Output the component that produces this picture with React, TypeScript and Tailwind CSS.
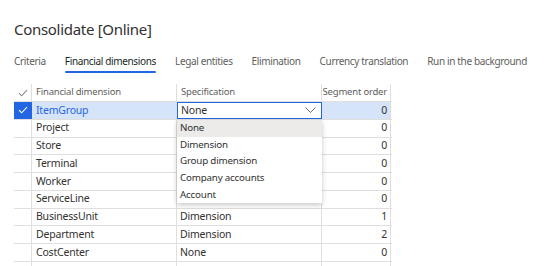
import React from 'react';

const rows = [
  { name: 'ItemGroup', spec: 'None', order: 0 },
  { name: 'Project', spec: 'None', order: 0 },
  { name: 'Store', spec: 'None', order: 0 },
  { name: 'Terminal', spec: 'None', order: 0 },
  { name: 'Worker', spec: 'None', order: 0 },
  { name: 'ServiceLine', spec: 'None', order: 0 },
  { name: 'BusinessUnit', spec: 'Dimension', order: 1 },
  { name: 'Department', spec: 'Dimension', order: 2 },
  { name: 'CostCenter', spec: 'None', order: 0 },
  { name: '', spec: '', order: null as number | null },
];

const tabs = ['Criteria', 'Financial dimensions', 'Legal entities', 'Elimination', 'Currency translation', 'Run in the background'];
const options = ['None', 'Dimension', 'Group dimension', 'Company accounts', 'Account'];

function Check({ color }: { color: string }) {
  return (
    <svg width="10" height="8" viewBox="0 0 10 8" fill="none">
      <path d="M1 4.2 L3.6 6.8 L9 1.2" stroke={color} strokeWidth="1.1" />
    </svg>
  );
}

export default function App() {
  return (
    <div className="w-[551px] h-[266px] overflow-hidden bg-white text-[#323130] whitespace-nowrap" style={{ fontFamily: '"Noto Sans", "Open Sans", sans-serif' }}>
      <h1 className="pl-[14px] pt-[19px] text-[15px] leading-[20px] tracking-[-0.3px]">Consolidate [Online]</h1>

      {/* Tabs */}
      <div className="flex gap-[19px] pl-[14px] mt-[15px] text-[10px] leading-[14px]">
        {tabs.map((t, i) => (
          <div key={t} className={`flex flex-col ${i === 1 ? 'text-[#201f1e]' : 'text-[#605e5c]'}`}>
            <span className="tracking-[-0.35px]">{t}</span>
            <span className={`mt-[3px] h-[2px] rounded-full ${i === 1 ? 'bg-[#2266e3]' : 'bg-transparent'}`} />
          </div>
        ))}
      </div>

      {/* Grid */}
      <div className="relative ml-[14px] mt-[11px] w-[378px] text-[10.5px] tracking-[-0.2px]">
        <div className="flex h-[18px] items-center border-b border-[#e1dfdd] text-[9.5px] text-[#605e5c]">
          <div className="w-[18px] h-full flex items-center justify-center border-r border-[#e1dfdd]"><Check color="#8a8886" /></div>
          <div className="w-[145px] h-full px-[4px] flex items-center border-r border-[#e1dfdd]">Financial dimension</div>
          <div className="w-[145px] h-full px-[4px] flex items-center border-r border-[#e1dfdd]">Specification</div>
          <div className="w-[69px] h-full px-[3px] flex items-center justify-end border-r border-[#e1dfdd]">Segment order</div>
        </div>
        {rows.map((r, i) => {
          const sel = i === 0;
          return (
            <div key={i} className="flex h-[17.75px] items-center border-b border-[#e1dfdd]">
              <div className={`w-[18px] h-full flex items-center justify-center border-r ${sel ? 'bg-[#2266e3] border-[#2266e3]' : 'border-[#e1dfdd]'}`}>
                {sel && <Check color="#ffffff" />}
              </div>
              <div className={`w-[145px] h-full px-[4px] flex items-center border-r border-[#e1dfdd] ${sel ? 'bg-[#d6e4f9] text-[#2266e3]' : ''}`}>{r.name}</div>
              {sel ? (
                <div className="w-[145px] h-full flex items-center justify-between px-[3px] border border-[#2266e3] bg-white">
                  <span>None</span>
                  <svg width="11" height="6" viewBox="0 0 11 6" fill="none" className="mr-[2px]">
                    <path d="M0.5 0.5 L5.5 5.5 L10.5 0.5" stroke="#605e5c" strokeWidth="0.9" />
                  </svg>
                </div>
              ) : (
                <div className="w-[145px] h-full px-[3px] flex items-center border-r border-[#e1dfdd]">{r.spec}</div>
              )}
              <div className={`w-[69px] h-full px-[3px] flex items-center justify-end border-r border-[#e1dfdd] ${sel ? 'bg-[#d6e4f9]' : ''}`}>{r.order}</div>
            </div>
          );
        })}

        {/* Dropdown */}
        <div className="absolute left-[163px] top-[36px] w-[145px] bg-white shadow-[0_2px_5px_rgba(0,0,0,0.22)] text-[9.8px]">
          {options.map((o, i) => (
            <div key={o} className={`h-[16.7px] flex items-center px-[3px] ${i === 0 ? 'bg-[#edebe9]' : ''}`}>{o}</div>
          ))}
        </div>
      </div>
    </div>
  );
}
